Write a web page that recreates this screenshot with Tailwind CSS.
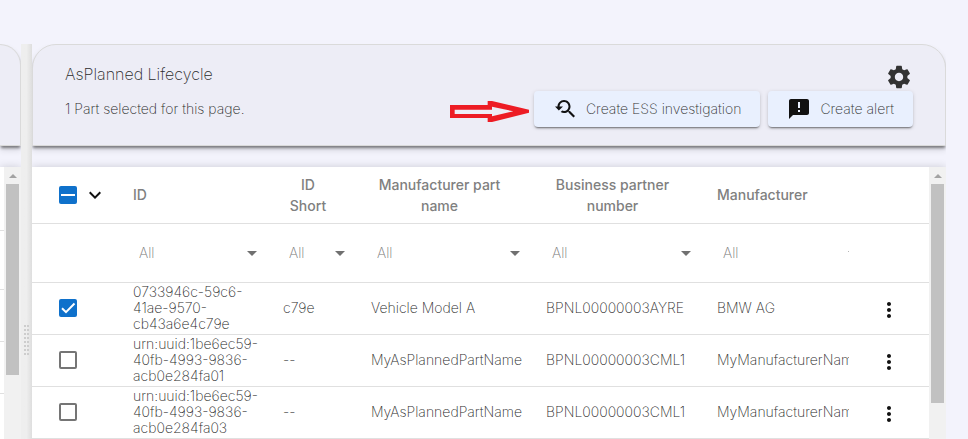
<!DOCTYPE html>
<html lang="en">
<head>
<meta charset="utf-8">
<meta name="viewport" content="width=device-width, initial-scale=1">
<title>Parts</title>
<script src="https://cdn.jsdelivr.net/npm/@tailwindcss/browser@4"></script>
</head>
<body class="bg-[#f3f3fc] font-['Inter','Open_Sans',sans-serif] font-extralight text-sm text-[#2b2b2b]">
<svg class="hidden" aria-hidden="true">
  <symbol id="caret" viewBox="0 0 10 5"><path d="M0 0h10L5 5z"/></symbol>
  <symbol id="more" viewBox="0 0 24 24"><path d="M12 8c1.1 0 2-.9 2-2s-.9-2-2-2-2 .9-2 2 .9 2 2 2zm0 2c-1.1 0-2 .9-2 2s.9 2 2 2 2-.9 2-2-.9-2-2-2zm0 6c-1.1 0-2 .9-2 2s.9 2 2 2 2-.9 2-2-.9-2-2-2z"/></symbol>
  <symbol id="up" viewBox="0 0 8 4"><path d="M0 4h8L4 0z"/></symbol>
</svg>
<main class="flex h-screen overflow-hidden pt-11 pr-[22px]">

  <!-- Neighbouring panel -->
  <section class="flex w-[21px] shrink-0 flex-col overflow-hidden" aria-label="AsBuilt">
    <div class="h-[102px] shrink-0 rounded-tr-3xl border-t border-r border-b border-[#dadada] bg-[#ededf6] shadow-[0_3px_3px_-1px_rgba(0,0,0,0.45),0_4px_6px_rgba(0,0,0,0.12)]"></div>
    <div class="mt-[21px] flex flex-1 shadow-[0_0_8px_rgba(0,0,0,0.16)]">
      <div class="flex-1 bg-white">
        <div class="h-16 border-b border-[#e0e0e0]"></div>
        <div class="h-[59px] border-b border-[#e0e0e0]"></div>
        <div class="h-[52px] border-b border-[#e0e0e0]"></div>
        <div class="h-[52px] border-b border-[#e0e0e0]"></div>
      </div>
      <div class="flex w-[17px] flex-col items-center bg-[#f1f1f1]">
        <svg class="mt-[7px] mb-[6px] h-1 w-2 shrink-0 fill-[#a3a3a3]"><use href="#up"/></svg>
        <div class="h-[191px] w-[13px] bg-[#c1c1c1]"></div>
      </div>
    </div>
  </section>

  <!-- Split handle -->
  <div class="flex w-[11px] shrink-0 justify-center bg-linear-to-r from-[#eee] from-50% to-[#dedede] pt-[281px]" role="separator">
    <svg class="h-[30px] w-[5px] fill-[#cdcdcd]" viewBox="0 0 5 30"><path d="M0 0h2v2H0zM3 0h2v2H3zM0 4h2v2H0zM3 4h2v2H3zM0 8h2v2H0zM3 8h2v2H3zM0 12h2v2H0zM3 12h2v2H3zM0 16h2v2H0zM3 16h2v2H3zM0 20h2v2H0zM3 20h2v2H3zM0 24h2v2H0zM3 24h2v2H3zM0 28h2v2H0zM3 28h2v2H3z"/></svg>
  </div>

  <!-- AsPlanned panel -->
  <section class="flex min-w-0 flex-1 flex-col overflow-hidden">
    <header class="shrink-0 rounded-t-3xl border border-[#dadada] bg-[#ededf6] px-8 py-[18px] shadow-[0_3px_3px_-1px_rgba(0,0,0,0.45),0_4px_6px_rgba(0,0,0,0.12)]">
      <div class="flex h-7 items-start justify-between">
        <h1 class="text-base leading-[22px]">AsPlanned Lifecycle</h1>
        <button type="button" aria-label="Settings">
          <svg class="size-7 fill-[#333]" viewBox="0 0 24 24"><path d="M19.14 12.94c.04-.3.06-.61.06-.94 0-.32-.02-.64-.07-.94l2.03-1.58c.18-.14.23-.41.12-.61l-1.92-3.32c-.12-.22-.37-.29-.59-.22l-2.39.96c-.5-.38-1.03-.7-1.62-.94l-.36-2.54c-.04-.24-.24-.41-.48-.41h-3.84c-.24 0-.43.17-.47.41l-.36 2.54c-.59.24-1.13.57-1.62.94l-2.39-.96c-.22-.08-.47 0-.59.22L2.74 8.87c-.12.21-.08.47.12.61l2.03 1.58c-.05.3-.09.63-.09.94s.02.64.07.94l-2.03 1.58c-.18.14-.23.41-.12.61l1.92 3.32c.12.22.37.29.59.22l2.39-.96c.5.38 1.03.7 1.62.94l.36 2.54c.05.24.24.41.48.41h3.84c.24 0 .44-.17.47-.41l.36-2.54c.59-.24 1.13-.56 1.62-.94l2.39.96c.22.08.47 0 .59-.22l1.92-3.32c.12-.22.07-.47-.12-.61l-2.01-1.58zM12 15.6c-1.98 0-3.6-1.62-3.6-3.6s1.62-3.6 3.6-3.6 3.6 1.62 3.6 3.6-1.62 3.6-3.6 3.6z"/></svg>
        </button>
      </div>
      <div class="flex items-center justify-between">
        <p>1 Part selected for this page.</p>
        <div class="flex items-center gap-[5px]">
          <svg class="mt-1 h-[21px] w-[79px] fill-[#ed1c24]" viewBox="57 153 237 63" aria-hidden="true"><path fill-rule="evenodd" d="M57 165H170V153H183L294 179V188L183 216H170V204H57ZM71 179V192H183V199L247 184L183 170V179Z"/></svg>
          <div class="flex gap-2">
            <button type="button" class="flex h-9 items-center gap-[9px] rounded bg-[#e9f0fe] px-[19px] text-[#333] shadow-[0_2px_2px_-1px_rgba(0,0,0,0.5),0_1px_4px_rgba(0,0,0,0.14)]">
              <svg class="size-6 fill-[#111]" viewBox="0 0 24 24"><path d="M17.01 14h-.8l-.27-.27c.98-1.14 1.57-2.61 1.57-4.23 0-3.59-2.91-6.5-6.5-6.5s-6.5 3-6.5 6.5H2l3.84 4 4.16-4H6.51C6.51 7 8.53 5 11.01 5s4.5 2.01 4.5 4.5c0 2.48-2.02 4.5-4.5 4.5-.65 0-1.26-.14-1.82-.38L7.71 15.1c.97.57 2.09.9 3.3.9 1.61 0 3.08-.59 4.22-1.57l.27.27v.79l5.01 4.99L22 19l-4.99-5z"/></svg>
              Create ESS investigation
            </button>
            <button type="button" class="flex h-9 items-center gap-[9px] rounded bg-[#e9f0fe] px-[19px] text-[#333] shadow-[0_2px_2px_-1px_rgba(0,0,0,0.5),0_1px_4px_rgba(0,0,0,0.14)]">
              <svg class="size-6 fill-[#111]" viewBox="0 0 24 24"><path d="M20 2H4c-1.1 0-1.99.9-1.99 2L2 22l4-4h14c1.1 0 2-.9 2-2V4c0-1.1-.9-2-2-2zm-7 9h-2V5h2v6zm0 4h-2v-2h2v2z"/></svg>
              Create alert
            </button>
          </div>
        </div>
      </div>
    </header>

    <div class="mt-[21px] flex flex-1 shadow-[0_0_8px_rgba(0,0,0,0.16)]">
      <div class="min-w-0 flex-1 bg-white">
        <table class="w-full table-fixed border-separate border-spacing-0 text-left">
          <colgroup>
            <col class="w-[101px]"><col class="w-[150px]"><col class="w-[88px]"><col class="w-[175px]"><col class="w-[171px]"><col><col class="w-16">
          </colgroup>
          <thead class="text-[#808080]">
            <tr class="h-[57px] *:border-b *:border-[#e0e0e0]">
              <th class="p-0 pl-[27px]">
                <div class="flex items-center gap-[6px]">
                  <label class="grid size-[18px]">
                    <input type="checkbox" checked aria-label="Select all rows" class="col-start-1 row-start-1 size-[18px] appearance-none rounded-xs bg-[#0f71cb]">
                    <svg class="pointer-events-none col-start-1 row-start-1 size-[18px] fill-white" viewBox="0 0 18 18"><path d="M2 8h14v2H2z"/></svg>
                  </label>
                  <button type="button" aria-label="Selection menu"><svg class="block size-6 fill-[#111]" viewBox="0 0 24 24"><path d="M16.59 8.59L12 13.17 7.41 8.59 6 10l6 6 6-6z"/></svg></button>
                </div>
              </th>
              <th class="p-0 font-medium">ID</th>
              <th class="p-0 pr-[38px] text-center leading-[21px] font-medium">ID<br>Short</th>
              <th class="p-0 pr-[38px] text-center leading-[21px] font-medium">Manufacturer part name</th>
              <th class="p-0 pr-[38px] text-center leading-[21px] font-medium">Business partner number</th>
              <th class="p-0 font-medium">Manufacturer</th>
              <th class="p-0"></th>
            </tr>
            <tr class="h-[59px] text-[#777] *:border-b *:border-[#e0e0e0]">
              <td class="p-0"></td>
              <td class="p-0 pr-[26px] pl-[6px]"><label class="flex items-center"><select aria-label="Filter ID" class="min-w-0 flex-1 appearance-none"><option>All</option></select><svg class="h-[5px] w-[10px] fill-[#707070]"><use href="#caret"/></svg></label></td>
              <td class="p-0 pr-[26px] pl-[6px]"><label class="flex items-center"><select aria-label="Filter ID short" class="min-w-0 flex-1 appearance-none"><option>All</option></select><svg class="h-[5px] w-[10px] fill-[#707070]"><use href="#caret"/></svg></label></td>
              <td class="p-0 pr-[26px] pl-[6px]"><label class="flex items-center"><select aria-label="Filter manufacturer part name" class="min-w-0 flex-1 appearance-none"><option>All</option></select><svg class="h-[5px] w-[10px] fill-[#707070]"><use href="#caret"/></svg></label></td>
              <td class="p-0 pr-[26px] pl-[6px]"><label class="flex items-center"><select aria-label="Filter business partner number" class="min-w-0 flex-1 appearance-none"><option>All</option></select><svg class="h-[5px] w-[10px] fill-[#707070]"><use href="#caret"/></svg></label></td>
              <td class="p-0 pr-4 pl-[6px]"><label class="flex items-center overflow-hidden"><select aria-label="Filter manufacturer" class="w-[125px] shrink-0 appearance-none"><option>All</option></select><svg class="h-[5px] w-[10px] shrink-0 fill-[#707070]"><use href="#caret"/></svg></label></td>
              <td class="p-0"></td>
            </tr>
          </thead>
          <tbody class="leading-4">
            <tr class="h-[52px] *:border-b *:border-[#e0e0e0]">
              <td class="p-0 pb-[2px] pl-[27px]">
                <label class="grid size-[18px]">
                  <input type="checkbox" checked aria-label="Select Vehicle Model A" class="col-start-1 row-start-1 size-[18px] appearance-none rounded-xs bg-[#0f71cb]">
                  <svg class="pointer-events-none col-start-1 row-start-1 size-[18px] fill-none stroke-white stroke-2" viewBox="0 0 18 18"><path d="M3 9.200l4 4L15.500 4.500"/></svg>
                </label>
              </td>
              <td class="p-0 pb-[2px]">0733946c-59c6-<br>41ae-9570-<br>cb43a6e4c79e</td>
              <td class="p-0 pb-[2px]">c79e</td>
              <td class="p-0 pb-[2px]">Vehicle Model A</td>
              <td class="p-0 pb-[2px]">BPNL00000003AYRE</td>
              <td class="p-0 pr-4 pb-[2px]"><div class="overflow-hidden">BMW AG</div></td>
              <td class="p-0 pt-[3px] pl-3"><button type="button" aria-label="Row menu" class="block"><svg class="block size-6 fill-[#111]"><use href="#more"/></svg></button></td>
            </tr>
            <tr class="h-[52px] *:border-b *:border-[#e0e0e0]">
              <td class="p-0 pb-[2px] pl-[27px]"><input type="checkbox" aria-label="Select part fa01" class="block size-[18px] appearance-none rounded-xs border-2 border-[#757575]"></td>
              <td class="p-0 pb-[2px]">urn:uuid:1be6ec59-<br>40fb-4993-9836-<br>acb0e284fa01</td>
              <td class="p-0 pb-[2px]">--</td>
              <td class="p-0 pb-[2px]">MyAsPlannedPartName</td>
              <td class="p-0 pb-[2px]">BPNL00000003CML1</td>
              <td class="p-0 pr-4 pb-[2px]"><div class="overflow-hidden whitespace-nowrap">MyManufacturerName</div></td>
              <td class="p-0 pt-[3px] pl-3"><button type="button" aria-label="Row menu" class="block"><svg class="block size-6 fill-[#111]"><use href="#more"/></svg></button></td>
            </tr>
            <tr class="h-[52px] *:border-b *:border-[#e0e0e0]">
              <td class="p-0 pb-[2px] pl-[27px]"><input type="checkbox" aria-label="Select part fa03" class="block size-[18px] appearance-none rounded-xs border-2 border-[#757575]"></td>
              <td class="p-0 pb-[2px]">urn:uuid:1be6ec59-<br>40fb-4993-9836-<br>acb0e284fa03</td>
              <td class="p-0 pb-[2px]">--</td>
              <td class="p-0 pb-[2px]">MyAsPlannedPartName</td>
              <td class="p-0 pb-[2px]">BPNL00000003CML1</td>
              <td class="p-0 pr-4 pb-[2px]"><div class="overflow-hidden whitespace-nowrap">MyManufacturerName</div></td>
              <td class="p-0 pt-[3px] pl-3"><button type="button" aria-label="Row menu" class="block"><svg class="block size-6 fill-[#111]"><use href="#more"/></svg></button></td>
            </tr>
          </tbody>
        </table>
      </div>
      <div class="flex w-[17px] shrink-0 flex-col items-center bg-[#f1f1f1]">
        <svg class="mt-[7px] mb-[6px] h-1 w-2 shrink-0 fill-[#a3a3a3]"><use href="#up"/></svg>
        <div class="h-[219px] w-[13px] bg-[#c1c1c1]"></div>
      </div>
    </div>
  </section>
</main>
</body>
</html>
